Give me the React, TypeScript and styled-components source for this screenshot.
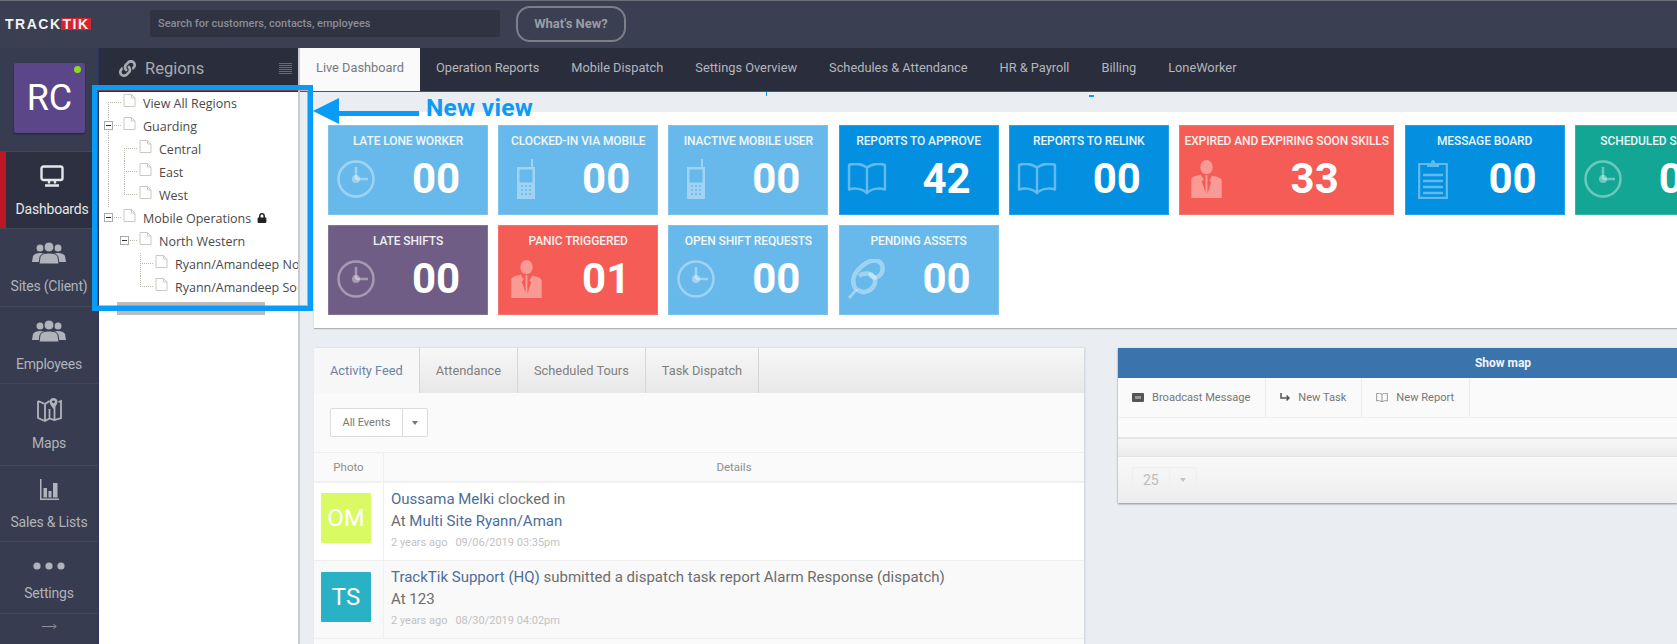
import React from 'react';
import styled, { createGlobalStyle } from 'styled-components';
import { FaLink, FaLock } from 'react-icons/fa';

const GlobalStyle = createGlobalStyle`
  html, body {
    margin: 0;
    padding: 0;
    background: #eaedf1;
    font-family: Roboto, "Liberation Sans", sans-serif;
  }
  * { box-sizing: border-box; }
`;

/* ---------- drawings ---------- */

const ClockIcon = () => (
  <svg width="38" height="38" viewBox="0 0 38 38" fill="none" stroke="currentColor" strokeWidth="2.500">
    <circle cx="19" cy="19" r="17.500" />
    <path d="M19 7v12M19 19h12" />
    <circle cx="19" cy="19" r="4" fill="currentColor" stroke="none" />
  </svg>
);

const PhoneIcon = () => (
  <svg width="18" height="40" viewBox="0 0 18 40" fill="currentColor">
    <path d="M14 0h2v8h2v32H0V8h14z M2.500 10.500v13h13v-13z" fillRule="evenodd" />
    <g fill="#67b9ec" opacity=".8">
      {[27, 31, 35].map((y) =>
        [5, 9, 13].map((x) => <rect key={`${x}-${y}`} x={x - 1} y={y - 1} width="2" height="2" />)
      )}
    </g>
  </svg>
);

const BookIcon = ({ size = 40 }: { size?: number }) => (
  <svg width={size} height={size * 0.78} viewBox="0 0 42 33" fill="none" stroke="currentColor" strokeWidth="2.600">
    <path d="M21 5C17 1 8 0 2 2v26c6-2 15-1 19 4 4-5 13-6 19-4V2c-6-2-15-1-19 3zM21 5v27" strokeLinejoin="round" />
  </svg>
);

const PersonIcon = () => (
  <svg width="31" height="38" viewBox="0 0 32 40" fill="currentColor">
    <ellipse cx="16" cy="7.500" rx="6.500" ry="7.500" />
    <path d="M0 40V21c0-3 4-4.500 10-5.500l3 5-2 2 4 12V16h2v19.500l4-12-2-2 3-5c6 1 10 2.500 10 5.500v19z" />
  </svg>
);

const ClipIcon = () => (
  <svg width="40" height="40" viewBox="0 0 40 40" fill="none" stroke="currentColor" strokeWidth="4.500">
    <path d="M2 39l8-9" strokeWidth="3" />
    <path d="M9 30C4 24 6 15 13 9c5-5 12-9 18-7 6 3 6 11 1 15-4 3-9 1-8-3" />
    <path d="M12 17c5-4 12-3 15 1 3 5 0 11-6 14-4 2-8 1-11-2" />
  </svg>
);

const ClipboardIcon = () => (
  <svg width="30" height="40" viewBox="0 0 30 40" fill="none" stroke="currentColor" strokeWidth="2.200">
    <path d="M9 5H1.200v33.800h27.600V5H21" />
    <path d="M9 8V4h4c0-4 4-4 4 0h4v4z" fill="currentColor" stroke="none" />
    <path d="M5 16h20M5 22h20M5 28h20M5 34h20" strokeWidth="2.500" />
  </svg>
);

const MonitorIcon = () => (
  <svg width="24" height="22" viewBox="0 0 24 22" fill="none" stroke="currentColor" strokeWidth="2.400">
    <rect x="1.500" y="1.500" width="21" height="13.500" rx="2" />
    <path d="M9 15.500v3M15 15.500v3" />
    <path d="M5 20.500h14" strokeWidth="2.500" />
  </svg>
);

const GroupIcon = () => (
  <svg width="34" height="22" viewBox="0 0 34 22" fill="currentColor">
    <circle cx="8" cy="6" r="3.500" />
    <circle cx="26" cy="6" r="3.500" />
    <path d="M0 20l1-6c1-2 4-3 7-3s6 1 7 3l1 6zM18 20l1-6c1-2 4-3 7-3s6 1 7 3l1 6z" />
    <circle cx="17" cy="5" r="5" stroke="#373c50" strokeWidth="1" />
    <path d="M7 22l1-7c1-3 5-4 9-4s8 1 9 4l1 7z" stroke="#373c50" strokeWidth="1" />
  </svg>
);

const MapIcon = () => (
  <svg width="25" height="25" viewBox="0 0 25 25" fill="none" stroke="currentColor" strokeWidth="1.800">
    <path d="M1 3l7 3 4.500-3M17.500 8v13.500M8 6v17M1 3v17l7 3 4.500-2.500 5 1.500 6.500-2V3l-2.500 1M12.500 11v9.500" />
    <path
      d="M16.500 0c-2.500 0-4 1.800-4 3.800 0 2.500 4 7.200 4 7.200s4-4.700 4-7.200c0-2-1.500-3.800-4-3.800z"
      fill="currentColor"
      stroke="none"
    />
    <circle cx="16.500" cy="3.800" r="1.400" fill="#373c50" stroke="none" />
  </svg>
);

const BarsIcon = () => (
  <svg width="19" height="21" viewBox="0 0 19 21" fill="currentColor">
    <path d="M0 0h1.500v19.500H19V21H0z" />
    <rect x="3.500" y="9" width="3.500" height="9.500" />
    <rect x="8.500" y="12" width="3" height="6.500" />
    <rect x="13" y="4" width="4.500" height="14.500" />
  </svg>
);

const DotsIcon = () => (
  <svg width="32" height="8" viewBox="0 0 32 8" fill="currentColor">
    <circle cx="4" cy="4" r="3.600" />
    <circle cx="16" cy="4" r="3.600" />
    <circle cx="28" cy="4" r="3.600" />
  </svg>
);

const ThinArrowIcon = () => (
  <svg width="15" height="7" viewBox="0 0 15 7" fill="none" stroke="currentColor" strokeWidth="1">
    <path d="M0 3.500h14M11.500 1L14 3.500 11.500 6" />
  </svg>
);

const DocIcon = () => (
  <svg width="13" height="13" viewBox="0 0 13 13" fill="#fff" stroke="#c9c9c0" strokeWidth="1">
    <path d="M1 .500h7.500L12 4v8.500H1z" />
    <path d="M8.500 .500V4H12" fill="none" />
  </svg>
);

const BroadcastIcon = () => (
  <svg width="12" height="9" viewBox="0 0 12 9" fill="#555">
    <rect width="12" height="9" rx="1" />
    <rect x="3" y="3" width="6" height="3" fill="#999" />
  </svg>
);

const TaskIcon = () => (
  <svg width="10" height="9" viewBox="0 0 10 9" fill="none" stroke="#555" strokeWidth="1.500">
    <path d="M1 0v5h8M6.500 2.500L9 5 6.500 7.500" />
  </svg>
);

/* ---------- data ---------- */

type CardIcon = 'clock' | 'phone' | 'book' | 'person' | 'clip' | 'clipboard';
type Tone = 'sky' | 'blue' | 'red' | 'purple' | 'teal';

const toneColors: Record<Tone, string> = {
  sky: '#67b9ec',
  blue: '#0390e0',
  red: '#f55c55',
  purple: '#6f5d85',
  teal: '#13a695',
};

const cardIcons: Record<CardIcon, React.ReactNode> = {
  clock: <ClockIcon />,
  phone: <PhoneIcon />,
  book: <BookIcon />,
  person: <PersonIcon />,
  clip: <ClipIcon />,
  clipboard: <ClipboardIcon />,
};

type Card = { title: string; value: string; icon: CardIcon; tone: Tone; wide?: boolean };

const firstRow: Card[] = [
  { title: 'Late Lone Worker', value: '00', icon: 'clock', tone: 'sky' },
  { title: 'Clocked-in via Mobile', value: '00', icon: 'phone', tone: 'sky' },
  { title: 'Inactive Mobile User', value: '00', icon: 'phone', tone: 'sky' },
  { title: 'Reports to Approve', value: '42', icon: 'book', tone: 'blue' },
  { title: 'Reports to Relink', value: '00', icon: 'book', tone: 'blue' },
  { title: 'Expired and Expiring Soon Skills', value: '33', icon: 'person', tone: 'red', wide: true },
  { title: 'Message Board', value: '00', icon: 'clipboard', tone: 'blue' },
  { title: 'Scheduled Shifts', value: '00', icon: 'clock', tone: 'teal' },
];

const secondRow: Card[] = [
  { title: 'Late Shifts', value: '00', icon: 'clock', tone: 'purple' },
  { title: 'Panic Triggered', value: '01', icon: 'person', tone: 'red' },
  { title: 'Open Shift Requests', value: '00', icon: 'clock', tone: 'sky' },
  { title: 'Pending Assets', value: '00', icon: 'clip', tone: 'sky' },
];

const navItems = [
  { label: 'Dashboards', icon: <MonitorIcon />, active: true, height: 77 },
  { label: 'Sites (Client)', icon: <GroupIcon />, height: 78 },
  { label: 'Employees', icon: <GroupIcon />, height: 77 },
  { label: 'Maps', icon: <MapIcon />, height: 82 },
  { label: 'Sales & Lists', icon: <BarsIcon />, height: 76 },
  { label: 'Settings', icon: <DotsIcon />, height: 72, tight: true },
];

const topTabs = [
  'Live Dashboard',
  'Operation Reports',
  'Mobile Dispatch',
  'Settings Overview',
  'Schedules & Attendance',
  'HR & Payroll',
  'Billing',
  'LoneWorker',
];

const treeRows = [
  { label: 'View All Regions', depth: 0, stem: 'top' },
  { label: 'Guarding', depth: 0, open: true, stem: 'mid' },
  { label: 'Central', depth: 1, stem: 'top', trunk: true },
  { label: 'East', depth: 1, stem: 'mid', trunk: true },
  { label: 'West', depth: 1, stem: 'end', trunk: true },
  { label: 'Mobile Operations', depth: 0, open: true, locked: true, stem: 'none' },
  { label: 'North Western', depth: 1, open: true, stem: 'none' },
  { label: 'Ryann/Amandeep North', depth: 2, stem: 'mid' },
  { label: 'Ryann/Amandeep South', depth: 2, stem: 'end' },
];

const feedTabs = ['Activity Feed', 'Attendance', 'Scheduled Tours', 'Task Dispatch'];

/* ---------- page ---------- */

const Page = styled.div`
  position: relative;
  width: 1677px;
  height: 644px;
  overflow: hidden;
  display: grid;
  grid-template-columns: 99px 201px 1fr;
  grid-template-rows: 48px 1fr;
`;

const TopBar = styled.header`
  grid-column: 1 / -1;
  display: flex;
  align-items: center;
  background: #3a3f51;
  border-top: 1px solid #6b6e78;
  padding: 0 0 2px 5px;
`;

const Logo = styled.div`
  display: flex;
  align-items: center;
  width: 145px;
  font-family: "Liberation Sans", sans-serif;
  font-weight: 700;
  font-size: 14px;
  letter-spacing: 1.500px;
  color: #f2f2f2;
`;

const LogoMark = styled.span`
  background: #d8232f;
  padding: 0 1px 0 2px;
  margin-left: -1px;
  line-height: 12px;
`;

const SearchBox = styled.div`
  width: 350px;
  height: 27px;
  display: flex;
  align-items: center;
  padding-left: 8px;
  background: #2f3342;
  border-radius: 2px;
  color: #8a8d98;
  font-size: 11px;
  font-weight: 500;
`;

const NewsButton = styled.div`
  margin-left: 16px;
  width: 110px;
  height: 36px;
  display: flex;
  align-items: center;
  justify-content: center;
  border: 2px solid #7c7f88;
  border-radius: 14px;
  color: #9a9da5;
  font-size: 13px;
  font-weight: 700;
`;

const SideNav = styled.nav`
  background: #373c50;
  border-right: 1px solid #2a3760;
  display: flex;
  flex-direction: column;
`;

const ProfileSlot = styled.div`
  height: 103px;
  padding: 15px 0 0 14px;
`;

const Profile = styled.div`
  position: relative;
  width: 71px;
  height: 70px;
  display: flex;
  align-items: center;
  justify-content: center;
  background: #5b4689;
  border-radius: 2px;
  color: #fff;
  font-size: 36px;
  box-shadow: 0 1px 2px rgba(0, 0, 0, 0.4);
`;

const OnlineDot = styled.span`
  position: absolute;
  top: 3px;
  right: 4px;
  width: 7px;
  height: 7px;
  border-radius: 50%;
  background: #8fd82a;
`;

const NavItem = styled.div<{ $active?: boolean; $height: number; $tight?: boolean }>`
  height: ${(p) => p.$height}px;
  flex: none;
  display: flex;
  flex-direction: column;
  align-items: center;
  justify-content: center;
  gap: ${(p) => (p.$tight ? '5px' : '11px')};
  border-top: 1px solid #434859;
  border-left: ${(p) => (p.$active ? '6px solid #bf1622' : '0')};
  background: ${(p) => (p.$active ? '#2c3040' : 'transparent')};
  color: ${(p) => (p.$active ? '#e6e7ea' : '#b1b3ba')};
  font-size: 14px;
  letter-spacing: -0.2px;
`;

const NavIcon = styled.div`
  height: 26px;
  display: flex;
  align-items: center;
  justify-content: center;
`;

const NavLabel = styled.div`
  line-height: 18px;
`;

const Collapse = styled.div`
  flex: 1;
  display: flex;
  justify-content: center;
  align-items: flex-start;
  padding-top: 9px;
  border-top: 1px solid #434859;
  color: #8f929c;
`;

const RegionsPanel = styled.aside`
  background: #fff;
  border-right: 2px solid #c9ccd1;
  display: flex;
  flex-direction: column;
  overflow: hidden;
`;

const RegionsHeader = styled.div`
  height: 44px;
  flex: none;
  display: flex;
  align-items: center;
  padding: 0 6px 4px 20px;
  background: #2a2d3b;
  color: #a9abb3;
  font-size: 16.500px;
`;

const RegionsTitle = styled.span`
  flex: 1;
  margin-left: 9px;
`;

const ListGlyph = styled.span`
  width: 13px;
  height: 11px;
  background: repeating-linear-gradient(#666a73 0 1px, transparent 1px 2px);
`;

const Tree = styled.div`
  width: 199px;
  height: 207px;
  overflow: hidden;
  flex: none;
`;

const TreeRow = styled.div<{ $depth: number; $stem: string; $trunk?: boolean }>`
  position: relative;
  height: 23px;
  width: 260px;
  display: flex;
  align-items: center;
  padding-left: ${(p) => 24 + p.$depth * 16}px;
  color: #4a4a4a;
  font-family: "Open Sans", sans-serif;
  font-size: 12.500px;
  white-space: nowrap;
  background: ${(p) =>
    p.$trunk
      ? 'repeating-linear-gradient(#b9b9b0 0 1px, transparent 1px 2px) 9px 0 / 1px 100% no-repeat'
      : 'none'};

  &::before {
    content: '';
    display: ${(p) => (p.$stem === 'none' ? 'none' : 'block')};
    position: absolute;
    left: ${(p) => 9 + p.$depth * 16}px;
    top: ${(p) => (p.$stem === 'top' ? '10px' : '0')};
    bottom: ${(p) => (p.$stem === 'end' ? '12px' : '0')};
    border-left: 1px dotted #b9b9b0;
  }

  &::after {
    content: '';
    position: absolute;
    left: ${(p) => 9 + p.$depth * 16}px;
    top: 10px;
    width: 13px;
    border-top: 1px dotted #b9b9b0;
  }
`;

const Toggle = styled.span<{ $depth: number }>`
  position: absolute;
  z-index: 1;
  left: ${(p) => 5 + p.$depth * 16}px;
  top: 6px;
  width: 9px;
  height: 9px;
  display: flex;
  align-items: center;
  justify-content: center;
  background: #fff;
  border: 1px solid #aaa;

  &::before {
    content: '';
    width: 5px;
    height: 1px;
    background: #333;
  }
`;

const TreeDoc = styled.span`
  display: flex;
  margin: -6px 7px 0 0;
`;

const LockMark = styled.span`
  display: inline-flex;
  margin: -2px 0 0 6px;
  color: #222;
  font-size: 10px;
`;

const ScrollTrack = styled.div`
  margin-top: 3px;
  height: 13px;
  flex: none;
  padding-left: 18px;
`;

const ScrollThumb = styled.div`
  width: 148px;
  height: 100%;
  background: #bcbcbc;
`;

const Main = styled.main`
  min-width: 0;
  background: #eaedf1;
  display: flex;
  flex-direction: column;
  overflow: hidden;
`;

const TabStrip = styled.div`
  height: 44px;
  flex: none;
  display: flex;
  background: #2a2d3b;
  border-bottom: 1px solid #51545f;
`;

const TopTab = styled.div<{ $active?: boolean }>`
  display: flex;
  align-items: center;
  padding: 0 16px 4px;
  background: ${(p) => (p.$active ? '#fafafa' : 'transparent')};
  color: ${(p) => (p.$active ? '#77797f' : '#b4b6bd')};
  font-size: 12.800px;
  white-space: nowrap;
`;

const Content = styled.div`
  flex: 1;
  min-height: 0;
  padding: 20px 0 0 14px;
  display: flex;
  flex-direction: column;
  gap: 20px;
`;

const StatPanel = styled.section`
  height: 216px;
  flex: none;
  background: #fff;
  padding: 13px 14px;
  display: flex;
  flex-direction: column;
  gap: 10px;
  overflow: hidden;
  box-shadow: 0 1px 1px rgba(0, 0, 0, 0.25);
`;

const StatRow = styled.div`
  display: flex;
  gap: 10.200px;
`;

const Stat = styled.div<{ $tone: Tone; $wide?: boolean }>`
  flex: none;
  width: ${(p) => (p.$wide ? '215.500px' : '160px')};
  height: 90px;
  padding: 6px 0 0;
  background: ${(p) => toneColors[p.$tone]};
  border: 1px solid rgba(255, 255, 255, 0.15);
  color: #fff;
`;

const StatTitle = styled.div`
  height: 18px;
  line-height: 18px;
  text-align: center;
  text-transform: uppercase;
  font-size: 12px;
  font-weight: 500;
  letter-spacing: -0.1px;
  white-space: nowrap;
  opacity: 0.9;
`;

const StatBody = styled.div`
  display: grid;
  grid-template-columns: 56px 1fr;
  align-items: center;
  height: 54px;
  margin-top: 2px;
`;

const StatIcon = styled.div`
  display: flex;
  justify-content: center;
  padding-right: 2px;
  color: rgba(255, 255, 255, 0.38);
`;

const StatValue = styled.div`
  text-align: center;
  font-size: 42px;
  font-weight: 700;
  line-height: 50px;
`;

const Columns = styled.div`
  flex: 1;
  min-height: 0;
  display: grid;
  grid-template-columns: 770px 1fr;
  column-gap: 34px;
  align-items: start;
`;

const FeedCard = styled.section`
  height: 296px;
  background: #fafafa;
  box-shadow: 1px 0 2px rgba(0, 0, 0, 0.12);
  overflow: hidden;
`;

const FeedTabs = styled.div`
  height: 45px;
  display: flex;
  background: linear-gradient(#f7f7f7, #e8e8e8);
`;

const FeedTab = styled.div<{ $active?: boolean }>`
  display: flex;
  align-items: center;
  padding: 0 16px;
  border-right: 1px solid #d5d5d5;
  background: ${(p) => (p.$active ? '#f7f7f7' : 'transparent')};
  color: ${(p) => (p.$active ? '#6a83a8' : '#808080')};
  font-size: 12.800px;
`;

const FilterBar = styled.div`
  height: 60px;
  display: flex;
  align-items: center;
  padding-left: 16px;
  border-bottom: 1px solid #efefef;
`;

const Select = styled.div<{ $muted?: boolean }>`
  display: inline-flex;
  height: ${(p) => (p.$muted ? '27px' : '29px')};
  background: ${(p) => (p.$muted ? 'transparent' : '#fff')};
  border: 1px solid ${(p) => (p.$muted ? '#efefef' : '#dcdcdc')};
  border-radius: 2px;
  color: ${(p) => (p.$muted ? '#bcbcbc' : '#777')};
  font-size: ${(p) => (p.$muted ? '14px' : '11px')};
`;

const SelectLabel = styled.span<{ $muted?: boolean }>`
  display: flex;
  align-items: center;
  padding: 0 ${(p) => (p.$muted ? '10px' : '11.500px')};
  border-right: 1px solid ${(p) => (p.$muted ? '#efefef' : '#dcdcdc')};
`;

const SelectCaret = styled.span<{ $muted?: boolean }>`
  display: flex;
  align-items: center;
  padding: 0 ${(p) => (p.$muted ? '10px' : '9px')};

  &::before {
    content: '';
    border-top: 4px solid ${(p) => (p.$muted ? '#c4c4c4' : '#777')};
    border-left: 3.500px solid transparent;
    border-right: 3.500px solid transparent;
  }
`;

const FeedGrid = styled.div`
  display: grid;
  grid-template-columns: 69px 1fr;
`;

const HeadCell = styled.div`
  height: 30px;
  display: flex;
  align-items: center;
  justify-content: center;
  border-left: 1px solid #efefef;
  border-bottom: 2px solid #f0f0f0;
  color: #8e8e8e;
  font-size: 11.500px;

  &:first-child {
    border-left: 0;
  }
`;

const PhotoCell = styled.div<{ $odd?: boolean }>`
  height: 78px;
  padding: ${(p) => (p.$odd ? '10px' : '11px')} 0 0 7px;
  background: ${(p) => (p.$odd ? '#fff' : '#f9f9f9')};
  border-bottom: 1px solid #efefef;
`;

const Initials = styled.div<{ $color: string }>`
  width: 50px;
  height: 50px;
  display: flex;
  align-items: center;
  justify-content: center;
  background: ${(p) => p.$color};
  border-radius: 1px;
  color: #fff;
  font-size: 24px;
`;

const DetailCell = styled.div<{ $odd?: boolean }>`
  height: 78px;
  padding: 5px 0 0 7px;
  background: ${(p) => (p.$odd ? '#fff' : '#f9f9f9')};
  border-left: 1px solid #efefef;
  border-bottom: 1px solid #efefef;
  color: #6d6d6d;
  font-size: 15px;
  line-height: 22px;
`;

const Person = styled.span`
  color: #4d6d9a;
`;

const Meta = styled.div`
  color: #c2c2c2;
  font-size: 11px;
`;

const MetaDate = styled.span`
  margin-left: 8px;
`;

const MapCard = styled.section`
  height: 155px;
  background: #fafafa;
  box-shadow: 0 1px 2px rgba(0, 0, 0, 0.4);
`;

const MapBar = styled.div`
  height: 30px;
  display: flex;
  align-items: center;
  justify-content: center;
  padding-left: 211px;
  background: #3b73ad;
  color: #f2f5f9;
  font-size: 12px;
  font-weight: 700;
`;

const ActionRow = styled.div`
  height: 40px;
  display: flex;
  border-bottom: 1px solid #efefef;
`;

const Action = styled.div`
  display: flex;
  align-items: center;
  gap: 8px;
  padding: 0 15px 0 14px;
  border-right: 1px solid #ececec;
  color: #777;
  font-size: 11.100px;
`;

const BlankRow = styled.div`
  height: 21px;
  border-bottom: 2px solid #e6e6e6;
`;

const ShadeRow = styled.div`
  height: 18px;
  background: linear-gradient(#f7f7f7, #ececec);
  border-bottom: 1px solid #e4e4e4;
`;

const MapFooter = styled.div`
  height: 46px;
  display: flex;
  align-items: center;
  padding-left: 14px;
  background: linear-gradient(#f9f9f9, #ededed);
`;

/* ---------- annotation laid over the shot ---------- */

const Callout = styled.div`
  position: absolute;
  left: 92px;
  top: 85px;
  width: 221px;
  height: 226px;
  border: 5px solid #0a9bf7;
  pointer-events: none;

  &::after {
    content: '';
    position: absolute;
    inset: 0;
    border: 1px solid rgba(200, 90, 90, 0.5);
  }
`;

const ArrowShaft = styled.div`
  position: absolute;
  left: 335px;
  top: 111px;
  width: 84px;
  height: 5px;
  background: #0a9bf7;
`;

const ArrowHead = styled.div`
  position: absolute;
  left: 313px;
  top: 98px;
  border-top: 13.500px solid transparent;
  border-bottom: 13.500px solid transparent;
  border-right: 26px solid #0a9bf7;
`;

const CalloutText = styled.div`
  position: absolute;
  left: 426px;
  top: 95px;
  color: #0a9bf7;
  font-family: Roboto, sans-serif;
  font-size: 24.500px;
  font-weight: 700;
  line-height: 25px;
  letter-spacing: 0.3px;
`;

const Tick = styled.div<{ $wide?: boolean }>`
  position: absolute;
  left: ${(p) => (p.$wide ? '1089px' : '766px')};
  top: ${(p) => (p.$wide ? '95px' : '92px')};
  width: ${(p) => (p.$wide ? '5px' : '1px')};
  height: ${(p) => (p.$wide ? '2px' : '4px')};
  background: #0a9bf7;
`;

const FeedEntry = ({
  odd,
  initials,
  color,
  headline,
  place,
  ago,
  date,
}: {
  odd?: boolean;
  initials: string;
  color: string;
  headline: React.ReactNode;
  place: React.ReactNode;
  ago: string;
  date: string;
}) => (
  <>
    <PhotoCell $odd={odd}>
      <Initials $color={color}>{initials}</Initials>
    </PhotoCell>
    <DetailCell $odd={odd}>
      <div>{headline}</div>
      <div>{place}</div>
      <Meta>
        {ago}
        <MetaDate>{date}</MetaDate>
      </Meta>
    </DetailCell>
  </>
);

const StatTile = ({ card }: { card: Card }) => (
  <Stat $tone={card.tone} $wide={card.wide}>
    <StatTitle>{card.title}</StatTitle>
    <StatBody>
      <StatIcon>{cardIcons[card.icon]}</StatIcon>
      <StatValue>{card.value}</StatValue>
    </StatBody>
  </Stat>
);

const App = () => {
  return (
    <Page>
      <GlobalStyle />
      <TopBar>
        <Logo>
          TRACK<LogoMark>TIK</LogoMark>
        </Logo>
        <SearchBox>Search for customers, contacts, employees</SearchBox>
        <NewsButton>What's New?</NewsButton>
      </TopBar>

      <SideNav>
        <ProfileSlot>
          <Profile>
            RC
            <OnlineDot />
          </Profile>
        </ProfileSlot>
        {navItems.map((item) => (
          <NavItem key={item.label} $active={item.active} $height={item.height} $tight={item.tight}>
            <NavIcon>{item.icon}</NavIcon>
            <NavLabel>{item.label}</NavLabel>
          </NavItem>
        ))}
        <Collapse>
          <ThinArrowIcon />
        </Collapse>
      </SideNav>

      <RegionsPanel>
        <RegionsHeader>
          <FaLink size={17} />
          <RegionsTitle>Regions</RegionsTitle>
          <ListGlyph />
        </RegionsHeader>
        <Tree>
          {treeRows.map((row) => (
            <TreeRow key={row.label} $depth={row.depth} $stem={row.stem} $trunk={row.trunk}>
              {row.open && <Toggle $depth={row.depth} />}
              <TreeDoc>
                <DocIcon />
              </TreeDoc>
              {row.label}
              {row.locked && (
                <LockMark>
                  <FaLock />
                </LockMark>
              )}
            </TreeRow>
          ))}
        </Tree>
        <ScrollTrack>
          <ScrollThumb />
        </ScrollTrack>
      </RegionsPanel>

      <Main>
        <TabStrip>
          {topTabs.map((tab, i) => (
            <TopTab key={tab} $active={i === 0}>
              {tab}
            </TopTab>
          ))}
        </TabStrip>
        <Content>
          <StatPanel>
            <StatRow>
              {firstRow.map((card) => (
                <StatTile key={card.title} card={card} />
              ))}
            </StatRow>
            <StatRow>
              {secondRow.map((card) => (
                <StatTile key={card.title} card={card} />
              ))}
            </StatRow>
          </StatPanel>

          <Columns>
            <FeedCard>
              <FeedTabs>
                {feedTabs.map((tab, i) => (
                  <FeedTab key={tab} $active={i === 0}>
                    {tab}
                  </FeedTab>
                ))}
              </FeedTabs>
              <FilterBar>
                <Select>
                  <SelectLabel>All Events</SelectLabel>
                  <SelectCaret />
                </Select>
              </FilterBar>
              <FeedGrid>
                <HeadCell>Photo</HeadCell>
                <HeadCell>Details</HeadCell>
                <FeedEntry
                  odd
                  initials="OM"
                  color="#d9fa63"
                  headline={
                    <>
                      <Person>Oussama Melki</Person> clocked in
                    </>
                  }
                  place={
                    <>
                      At <Person>Multi Site Ryann/Aman</Person>
                    </>
                  }
                  ago="2 years ago"
                  date="09/06/2019 03:35pm"
                />
                <FeedEntry
                  initials="TS"
                  color="#29b2c5"
                  headline={
                    <>
                      <Person>TrackTik Support (HQ)</Person> submitted a dispatch task report Alarm Response (dispatch)
                    </>
                  }
                  place="At 123"
                  ago="2 years ago"
                  date="08/30/2019 04:02pm"
                />
              </FeedGrid>
            </FeedCard>

            <MapCard>
              <MapBar>Show map</MapBar>
              <ActionRow>
                <Action>
                  <BroadcastIcon />
                  Broadcast Message
                </Action>
                <Action>
                  <TaskIcon />
                  New Task
                </Action>
                <Action>
                  <BookIcon size={12} />
                  New Report
                </Action>
              </ActionRow>
              <BlankRow />
              <ShadeRow />
              <MapFooter>
                <Select $muted>
                  <SelectLabel $muted>25</SelectLabel>
                  <SelectCaret $muted />
                </Select>
              </MapFooter>
            </MapCard>
          </Columns>
        </Content>
      </Main>

      <Callout />
      <ArrowHead />
      <ArrowShaft />
      <CalloutText>New view</CalloutText>
      <Tick />
      <Tick $wide />
    </Page>
  );
};

export default App;
